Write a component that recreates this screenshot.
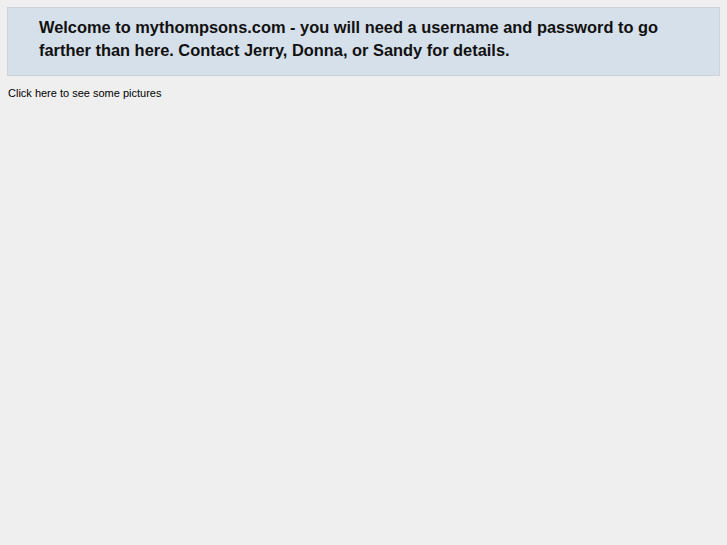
export default function App() {
  return (
    <div className="min-h-[545px] bg-[#efefef] p-[7px] font-['Liberation_Sans',Arial,sans-serif] text-black">
      <div className="border border-[#cdd3d8] bg-[#d6e0ea] pl-[31px] pr-[40px] pt-[8px] pb-[13px]">
        <p className="text-[16.4px] font-bold leading-[23px] text-[#111]">
          Welcome to mythompsons.com - you will need a username and password to go farther than here. Contact Jerry,
          Donna, or Sandy for details.
        </p>
      </div>
      <a href="#" className="mt-[10px] ml-px block text-[11px] leading-[14px] text-black">
        Click here to see some pictures
      </a>
    </div>
  );
}
